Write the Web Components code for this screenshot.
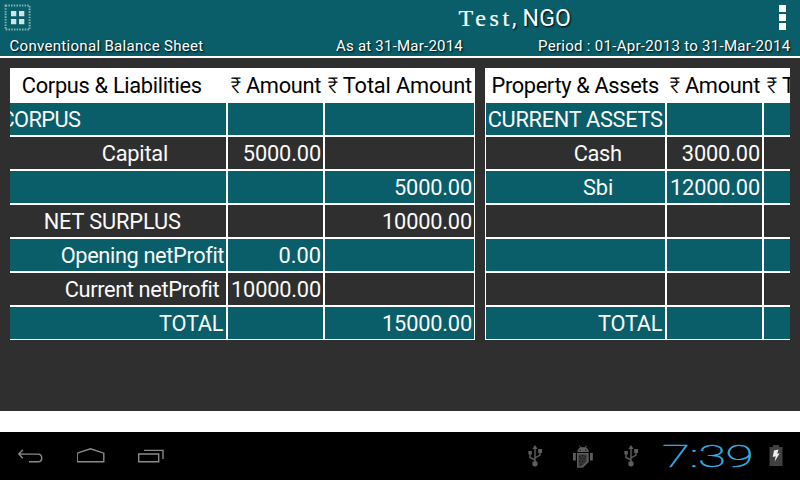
<!DOCTYPE html>
<html lang="en"><head><meta charset="utf-8"><title>Conventional Balance Sheet</title>
<style>body{margin:0;background:#fff;overflow:hidden;font-family:Roboto,"Liberation Sans",sans-serif}</style></head>
<body><balance-app></balance-app>
<script>
function shadow(el, html){ const r = el.attachShadow({mode:'open'}); const t = document.createElement('template'); t.innerHTML = html; r.append(t.content.cloneNode(true)); return r; }

// Text whose tracking is adjusted so that its advance equals the "w" attribute.
class FitLabel extends HTMLElement {
  connectedCallback(){
    const r = shadow(this, `<style>:host{display:block;flex:none;white-space:pre}span{display:inline-block}i{font-style:normal;font-weight:300}</style><span></span>`);
    const s = r.querySelector('span'); s.textContent = this.getAttribute('text');
    s.innerHTML = s.innerHTML.replace('₹', '<i>₹</i>');
    const w = +this.getAttribute('w');
    if (w) { const n = s.textContent.length; s.style.letterSpacing = ((w - s.getBoundingClientRect().width) / n) + 'px'; }
  }
}

class AppHeader extends HTMLElement {
  connectedCallback(){
    shadow(this, `<style>
:host{display:block;height:56px;background:#095e69;border-bottom:2px solid #fff;color:#fff;text-shadow:1px 1px 2px #000}
.top{height:36px;display:flex;align-items:flex-start;box-sizing:border-box;padding:4px 12px 0 4px}
.title{display:flex;flex:1;padding-left:427.5px;font-size:23px;line-height:28px;align-items:baseline}
.serif{font-family:"Liberation Serif",serif;font-size:24px;margin-right:-1px;text-shadow:none;-webkit-text-stroke:.2px #fff}
.sub{display:flex;padding:0 9px 0 9.5px;font-size:15px;line-height:20px}
.asat{margin-left:132.5px}.period{margin-left:75px}
svg{flex:none;display:block}.menu{margin-top:1px}
</style>
<div class="top"><svg width="27" height="27" viewBox="0 0 27 27"><rect x="1.6" y="1.6" width="24" height="24" fill="none" stroke="#7fb0b5" stroke-width="2" stroke-dasharray="1.6 1.1"/><path d="M7 7h5.3v5.3H7zM15 7h5.3v5.3H15zM7 15h5.3v5.3H7zM15 15h5.3v5.3H15z" fill="#d2e3e5"/></svg>
<div class="title"><fit-label class="serif" text="Test" w="54.5"></fit-label><fit-label text=", NGO" w="59"></fit-label></div>
<svg class="menu" width="9" height="26" viewBox="0 0 9 26"><path d="M0 0h7v7H0zM0 9h7v7H0zM0 18h7v7H0z" fill="#fff"/></svg></div>
<div class="sub"><fit-label text="Conventional Balance Sheet" w="194"></fit-label><fit-label class="asat" text="As at 31-Mar-2014" w="127"></fit-label><fit-label class="period" text="Period : 01-Apr-2013 to 31-Mar-2014" w="252.5"></fit-label></div>`);
  }
}

const SHEETS = {
  liabilities: { left:10, edges:[10,227,324,475], rows:[
    [['Corpus & Liabilities',21.8,180],['₹ Amount',230.5,90.5],['₹ Total Amount',327.5,144.5]],
    [['CORPUS',.5,79.8],0,0],
    [['Capital',101.8,66.2],['5000.00',242.8,78.2],0],
    [0,0,['5000.00',394,78]],
    [['NET SURPLUS',43.7,137],0,['10000.00',382,90]],
    [['Opening netProfit',60.7,162.6],['0.00',278.5,42.5],0],
    [['Current netProfit',64.7,153.8],['10000.00',231,90],0],
    [['TOTAL',159,64.2],0,['15000.00',382,90]]]},
  assets: { left:485, edges:[485,666,763,911], rows:[
    [['Property & Assets',491.5,167.5],['₹ Amount',669.5,90.5],['₹ Total Amount',766.5,145]],
    [['CURRENT ASSETS',487.7,175],0,0],
    [['Cash',573.7,48],['3000.00',681.8,78.2],0],
    [['Sbi',583,30.2],['12000.00',670,90],0],
    [0,0,0],[0,0,0],[0,0,0],
    [['TOTAL',598,64.2],0,0]]}
};

class LedgerTable extends HTMLElement {
  connectedCallback(){
    const d = SHEETS[this.getAttribute('sheet')], e = d.edges;
    const cells = d.rows.map((row,i) => row.map((c,j) =>
      `<div class="c ${i ? (i%2 ? 'odd':'even') : 'head'} ${j===0&&d.left===10?'first':''}">${c ? `<fit-label text="${c[0].replace('&','&amp;')}" w="${c[2]}" style="margin-left:${c[1]-e[j]-(i&&!(j===0&&d.left===10)?1:0)}px"></fit-label>` : ''}</div>`).join('')).join('');
    shadow(this, `<style>
:host{display:block;overflow:hidden;color:#fafafa;font-size:21.8px;line-height:34px}
.g{display:grid;grid-template-columns:${e[1]-e[0]}px ${e[2]-e[1]}px ${e[3]-e[2]}px;grid-template-rows:34px repeat(7,34px)}
.c{display:flex;border:1px solid #fff;box-sizing:border-box;min-width:0}
.first{border-left:0}
.odd{background:#095e69}.even{background:#2f2f2f}
.head{background:#fff;color:#000;border:0;line-height:35px}
</style><div class="g">${cells}</div>`);
  }
}

class SystemBar extends HTMLElement {
  connectedCallback(){
    const usb = `<svg width="16" height="22" viewBox="0 0 16 22"><g fill="none" stroke="#5d5d5d" stroke-width="1.4"><path d="M8 18V3M8 15L3 12.5V8M8 13l5-3V6"/></g><path d="M8 0l2.6 4H5.4zM1.4 6h3.4v3.5H1.4zM11.2 4H15v4h-3.8z" fill="#5d5d5d"/><circle cx="8" cy="18.7" r="2.7" fill="#5d5d5d"/></svg>`;
    shadow(this, `<style>
:host{display:flex;height:48px;background:#000;align-items:center;box-sizing:border-box;padding:0 17px}
svg{display:block;flex:none}.nav{display:flex;gap:33px;flex:1;padding-top:2px}.st{display:flex;gap:29px;padding-top:2px}
.st,.nav{margin-left:-.5px}
.clock{width:91px;height:34px;margin-left:24px;margin-right:15px;padding-top:2px;color:#33b5e5;font:100 31px/34px Roboto,sans-serif;letter-spacing:-.3px;-webkit-text-stroke:.4px #33b5e5}
.clock fit-label{transform:scaleX(1.65);transform-origin:0 0;width:58px;margin-left:-1px}
</style>
<div class="nav"><svg width="27" height="20" viewBox="0 0 27 20" fill="none" stroke="#8a8a8a" stroke-width="1.4"><path d="M12 14.7h9c5 0 5-7.6 0-7.6H2M5.8 3L1.8 7.1l4 4.2"/></svg>
<svg width="28" height="20" viewBox="0 0 28 20" fill="none" stroke="#8a8a8a" stroke-width="1.4"><path d="M-.3 14.7V6.2L13 1.8l13.3 4.4v8.5z" transform="translate(.5)"/></svg>
<svg width="28" height="20" viewBox="0 0 28 20" fill="none" stroke="#8a8a8a" stroke-width="1.4"><path d="M.7 7h20v7.7H.7zM6 3.4h19V12"/></svg></div>
<div class="st">${usb}<svg width="22" height="24" viewBox="0 0 22 24" fill="#5d5d5d"><path d="M5.3 7C5.5 4.6 7 3 8.2 2.5L7 .8l.7-.3 1.3 1.7h4L14.3.5l.7.3-1.2 1.7C15.3 3.2 16.7 4.6 16.9 7zM1 8h2.8v7.5H1zM18 8h2.8v7.5H18z"/><path d="M5 8h11.7v9l-6 5.8H5z"/><path d="M6.5 9.5h8v7l-5 5h-3z" fill="#343434"/><g fill="#111"><path d="M7.7 4.5h1.2v1.2H7.7zM13.2 4.5h1.2v1.2h-1.2zM7 11h1v1H7zM10 10h1v1h-1zM13 11h1v1h-1zM8.5 13.3h1v1h-1zM11.5 13.3h1v1h-1zM7 16h1v1H7zM10 16h1v1h-1zM8.3 19h1v1h-1z"/></g></svg>${usb}</div>
<div class="clock"><fit-label text="7:39"></fit-label></div>
<svg width="14" height="22" viewBox="0 0 14 22"><path d="M4 0h6v2h3.5v19H.5V2H4z" fill="#414141"/><path d="M5 5.5l4.5-1-1.3 4.3 2.5-.6-5 8.3 1-5.3-3 .7z" fill="#eee"/></svg>`);
  }
}

class BalanceApp extends HTMLElement {
  connectedCallback(){
    shadow(this, `<style>
:host{display:flex;flex-direction:column;width:800px;height:480px;background:#fff}
main{height:353px;box-sizing:border-box;background:#2f2f2f;padding:10px 10px 0;display:flex;gap:10px;align-items:flex-start}
ledger-table{flex:none;width:465px}ledger-table+ledger-table{width:305px}
system-bar{margin-top:auto}
</style><app-header></app-header><main><ledger-table sheet="liabilities"></ledger-table><ledger-table sheet="assets"></ledger-table></main><system-bar></system-bar>`);
  }
}
customElements.define('fit-label', FitLabel);
customElements.define('app-header', AppHeader);
customElements.define('ledger-table', LedgerTable);
customElements.define('system-bar', SystemBar);
customElements.define('balance-app', BalanceApp);
</script></body></html>
